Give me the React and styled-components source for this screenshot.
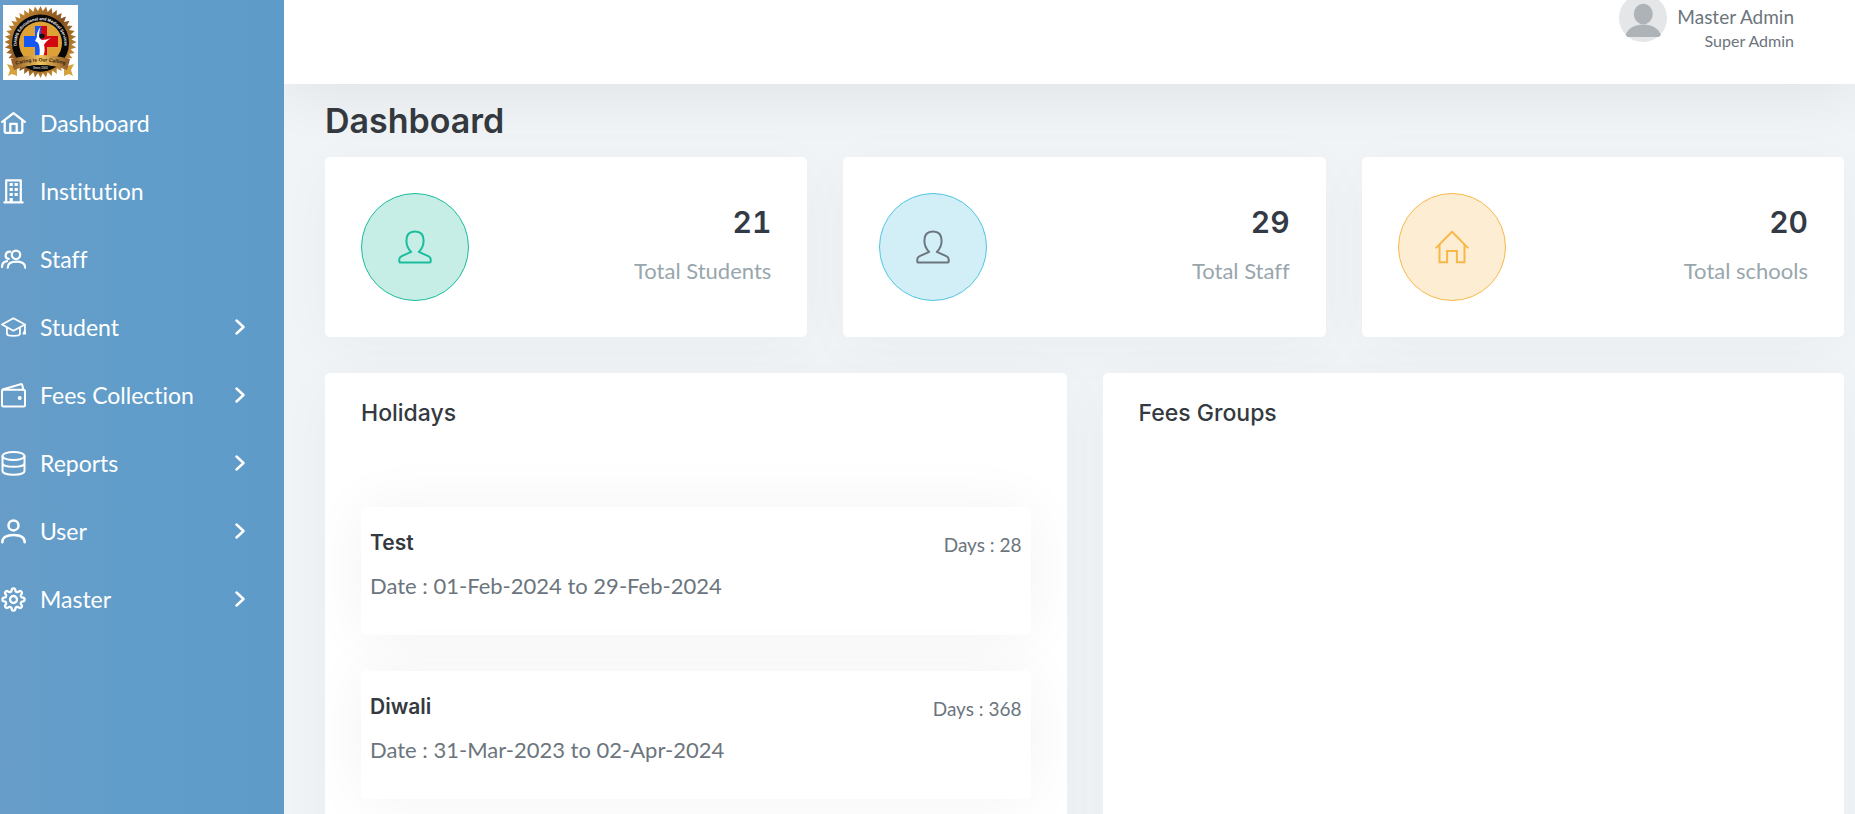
import React from 'react';
import styled, { createGlobalStyle } from 'styled-components';

const headingFont = 'Inter, "Liberation Sans", sans-serif';
const bodyFont = 'Lato, "Liberation Sans", sans-serif';

const GlobalStyle = createGlobalStyle`
  *, *::before, *::after { box-sizing: border-box; }
  body {
    margin: 0;
    background: #f0f4f7;
    color: #6c757d;
    font-family: ${bodyFont};
    font-variant-ligatures: none;
  }
  h1, h2, h3, p, ul { margin: 0; padding: 0; }
  ul { list-style: none; }
`;

const Shell = styled.div`
  display: grid;
  grid-template-columns: 284px minmax(0, 1fr);
  height: 100vh;
  overflow: hidden;
`;

const Sidebar = styled.aside`
  background: linear-gradient(90deg, #679dc8 0%, #619dca 45%, #5f9bc9 100%);
  z-index: 2;
`;

const Brand = styled.a`
  display: block;
  height: 89px;
  padding: 5px 3px;
`;

const navItem = `
  display: flex;
  align-items: center;
  gap: 14px;
  width: 100%;
  height: 68px;
  padding: 0 39px 0 1px;
  border: 0;
  background: none;
  color: #fff;
  font-family: ${bodyFont};
  font-size: 23px;
  font-variant-ligatures: none;
  line-height: 32px;
  text-align: left;
  text-decoration: none;
  cursor: pointer;
`;
const NavLink = styled.a`${navItem}`;
const NavButton = styled.button`${navItem}`;
const NavLabel = styled.span`flex: 1;`;

const LineIcon = styled.svg`
  flex: none;
  fill: none;
  stroke: currentColor;
  stroke-width: ${(p) => p.$weight || 2};
  stroke-linecap: round;
  stroke-linejoin: round;
`;

const Page = styled.div`
  display: flex;
  flex-direction: column;
  min-width: 0;
  height: 100vh;
`;

const Header = styled.header`
  display: flex;
  flex: none;
  justify-content: flex-end;
  align-items: flex-start;
  height: 84px;
  padding-right: 61px;
  background: #fff;
  box-shadow: 0 10px 60px rgba(0, 0, 0, 0.07);
  z-index: 1;
`;

const Profile = styled.a`
  display: flex;
  gap: 10px;
  color: #6c757d;
  text-decoration: none;
`;
const Avatar = styled.svg`
  margin-top: -6px;
`;
const ProfileText = styled.span`
  display: flex;
  flex-direction: column;
  padding-top: 5px;
  text-align: right;
  line-height: 24px;
`;
const ProfileName = styled.span`font-size: 19px;`;
const ProfileRole = styled.span`font-size: 16px;`;

const Main = styled.main`
  flex: 1;
  min-height: 0;
  padding: 16px 11px 36px 41px;
  overflow-y: auto;
  scrollbar-width: none;
`;

const Title = styled.h1`
  margin-bottom: 15px;
  color: #343a40;
  font: 600 34px/42px ${headingFont};
`;

const Grid = styled.div`
  display: grid;
  grid-template-columns: repeat(${(p) => p.$columns}, minmax(0, 1fr));
  gap: 36px;
  margin-bottom: 36px;
`;

const Card = styled.section`
  padding: 36px;
  border-radius: 5px;
  background: #fff;
  box-shadow: 0 10px 60px rgba(0, 0, 0, 0.03);
`;

const StatCard = styled(Card)`
  display: flex;
  justify-content: space-between;
  align-items: center;
`;

const Badge = styled.span`
  display: grid;
  place-items: center;
  width: 108px;
  height: 108px;
  border: 1px solid ${(p) => p.$line};
  border-radius: 50%;
  background: ${(p) => p.$fill};
  color: ${(p) => p.$ink};
`;

const StatText = styled.div`text-align: right;`;
const StatValue = styled.p`
  margin-bottom: 14px;
  color: #323a46;
  font: 600 30px/34px ${headingFont};
  font-variant-numeric: tabular-nums;
`;
const StatLabel = styled.p`
  color: #98a6ad;
  font-size: 22px;
  line-height: 36px;
`;

const Panel = styled(Card)`
  min-height: 540px;
  padding-top: 24px;
`;
const PanelTitle = styled.h2`
  margin-bottom: 78px;
  color: #343a40;
  font: 500 23px/32px ${headingFont};
`;

const HolidayList = styled.ul`
  display: grid;
  gap: 36px;
`;
const Holiday = styled.li`
  height: 128px;
  padding: 20px 9px;
  border-radius: 5px;
  background: #fff;
  box-shadow: 0 0 60px rgba(0, 0, 0, 0.05);
`;
const HolidayTop = styled.div`
  display: flex;
  justify-content: space-between;
  align-items: flex-end;
  height: 32px;
  margin-bottom: 10px;
`;
const HolidayName = styled.h3`
  color: #343a40;
  font: 600 21px/32px ${headingFont};
`;
const HolidayDays = styled.span`
  font-size: 19px;
  line-height: 28px;
`;
const HolidayDate = styled.p`
  font-size: 22px;
  line-height: 34px;
`;

const gearPath = (() => {
  const points = [];
  for (let i = 0; i < 160; i += 1) {
    const angle = (i / 160) * Math.PI * 2;
    const radius = 9.6 + 1.5 * Math.tanh(2 * Math.cos(8 * angle));
    points.push(`${(12.5 + radius * Math.sin(angle)).toFixed(2)} ${(12.5 - radius * Math.cos(angle)).toFixed(2)}`);
  }
  return `M${points.join('L')}Z`;
})();

const icons = {
  home: (
    <>
      <path d="M1.2 10.8 12.5 2.2l11.3 8.6" />
      <path d="M3.7 9.5v11.3a1 1 0 0 0 1 1h15.6a1 1 0 0 0 1-1V9.5" />
      <path d="M9.3 21.5v-8.7h6.4v8.7" />
    </>
  ),
  building: (
    <>
      <path d="M5.2 23V1.3h14.6V23M3.4 23.4h18.2" />
      <path d="M10.2 4v3M15.2 4v3M10.2 9v3M15.2 9v3M10.2 14v3M15.2 14v3M10.2 19v4" strokeWidth="3.2" strokeLinecap="butt" />
    </>
  ),
  staff: (
    <>
      <circle cx="15" cy="7.8" r="4.2" />
      <path d="M6.7 20.7c0-4 3.2-6 8.6-6s8.9 2 8.9 6M9.3 4.7C3.7 4.5 3.2 11.2 7.7 11.9M1 20c0-3.5 1.8-5.3 5-5.9" />
    </>
  ),
  student: (
    <>
      <path d="M12.4 3.2 24 9.5 12.4 15.8 1 9.5Z" />
      <path d="M5.9 12.7v6.5c1 2.3 12 2.3 13 0v-6.5M23.9 9.8V16M23.7 16l-1.2 2.6h2.2Z" />
    </>
  ),
  wallet: (
    <>
      <rect x="1" y="6.8" width="23" height="16.7" rx="1.5" />
      <path d="M1.6 6.5 19.6 1.2c1-.3 1.5.2 1.7 1l1 4.3" />
      <circle cx="18.7" cy="15" r="1" />
    </>
  ),
  reports: (
    <>
      <ellipse cx="12.5" cy="5" rx="11" ry="4" />
      <path d="M1.5 5v15c0 5 22 5 22 0V5M1.5 12.3c0 4.7 22 4.7 22 0" />
    </>
  ),
  user: (
    <>
      <circle cx="12.5" cy="6.4" r="5" />
      <path d="M1.3 23.2c0-4.7 4.2-7.3 11.2-7.3s11.2 2.6 11.2 7.3" />
    </>
  ),
  master: (
    <>
      <path d={gearPath} />
      <circle cx="12.5" cy="12.5" r="3.5" />
    </>
  ),
  person: (
    <path d="M13.2 21.9C10 19 8.4 15.5 8.4 10.500 8.400 4.500 11.500 1.400 17 1.400s8.600 3.100 8.600 9.100c0 5-1.600 8.500-4.800 11.400l9.500 4.200c1.900.9 2.400 1.600 2.400 3.200v2.200c0 .6-.4 1-1 1H2.300c-.6 0-1-.4-1-1v-2.200c0-1.600.5-2.300 2.400-3.200Z" />
  ),
  house: (
    <>
      <path d="M1.3 17.6 17 1.7l15.7 15.9" />
      <path d="M4.5 15v17.3h7.6V20.9h9.8v11.4h7.6V15" strokeLinejoin="miter" />
    </>
  ),
};

const navigation = [
  { label: 'Dashboard', icon: 'home', weight: 2.3 },
  { label: 'Institution', icon: 'building', weight: 2.2 },
  { label: 'Staff', icon: 'staff', weight: 2.2 },
  { label: 'Student', icon: 'student', weight: 1.8, menu: true },
  { label: 'Fees Collection', icon: 'wallet', weight: 2, menu: true },
  { label: 'Reports', icon: 'reports', weight: 2, menu: true },
  { label: 'User', icon: 'user', weight: 2.5, menu: true },
  { label: 'Master', icon: 'master', weight: 2.3, menu: true },
];

const stats = [
  { value: 21, label: 'Total Students', icon: 'person', line: '#1abc9c', fill: '#c6eee6', ink: '#1abc9c' },
  { value: 29, label: 'Total Staff', icon: 'person', line: '#4fc6e1', fill: '#d2eff8', ink: '#6c757d' },
  { value: 20, label: 'Total schools', icon: 'house', line: '#f7b84b', fill: '#fdedd2', ink: '#f7b84b' },
];

const holidays = [
  { name: 'Test', days: 28, from: '01-Feb-2024', to: '29-Feb-2024' },
  { name: 'Diwali', days: 368, from: '31-Mar-2023', to: '02-Apr-2024' },
];

const sealTeeth = Array.from({ length: 80 }, (_, i) => {
  const radius = i % 2 ? 31 : 36;
  const angle = (i / 80) * Math.PI * 2;
  return `${(37.5 + radius * Math.sin(angle)).toFixed(1)},${(37 - radius * Math.cos(angle)).toFixed(1)}`;
}).join(' ');

function Logo() {
  return (
    <svg width="75" height="75" viewBox="0 0 75 75" role="img" aria-label="Educational and Medical Services">
      <defs>
        <linearGradient id="seal" x1="0" x2="1" y1="0" y2="1">
          <stop offset="0" stopColor="#dc9c35" />
          <stop offset=".5" stopColor="#84501f" />
          <stop offset="1" stopColor="#e5a93c" />
        </linearGradient>
        <linearGradient id="ribbon">
          <stop offset="0" stopColor="#8c5524" />
          <stop offset=".5" stopColor="#f0c35c" />
          <stop offset="1" stopColor="#8c5524" />
        </linearGradient>
        <path id="sealArc" d="M14 44a24 24 0 1 1 47 0" />
        <path id="ribbonArc" d="M12 60q25.5-7 51 0" />
      </defs>
      <rect width="75" height="75" fill="#fff" />
      <polygon points={sealTeeth} fill="url(#seal)" />
      <circle cx="37.5" cy="38" r="28.5" fill="#080808" />
      <circle cx="37.5" cy="38" r="21.5" fill="#dfa236" />
      <text fill="#fff" fontFamily="Liberation Sans, sans-serif" fontSize="4" fontWeight="700">
        <textPath href="#sealArc" startOffset="50%" textAnchor="middle">DAIMS Educational and Medical Services</textPath>
      </text>
      <path d="M32 21h6v31h-6V42H21V31h11Z" fill="#1457f5" />
      <path d="M38 21h6v10h11v11H44v10h-6Z" fill="#d10812" />
      <path d="M37.5 22c-3 4-4 7-3.500 10l-2 4c2 1 3 1 4 4 1 4 1 8 0 12h4c2-5 2-8 1-12 1-3 4-5 7-7-3 1-6 2-9 2-3-1-4-5-1.500-13Z" fill="#fff" />
      <ellipse cx="39" cy="31" rx="2.8" ry="2.3" fill="#18120f" />
      <path d="m4 59 10 3v9l-5-2-4 2 2-6ZM71 59l-10 3v9l5-2 4 2-2-6Z" fill="#d5a23d" />
      <path d="M8 54q29-8 59 0l-3 11q-26-10-53 0Z" fill="url(#ribbon)" />
      <text fill="#302010" fontFamily="Liberation Sans, sans-serif" fontSize="5" fontWeight="700">
        <textPath href="#ribbonArc" startOffset="50%" textAnchor="middle">Caring is Our Calling</textPath>
      </text>
      <path d="M23 62q14-4 29 0-14 9-29 0Z" fill="#080808" />
      <text x="37.5" y="64" textAnchor="middle" fill="#fff" fontFamily="Liberation Sans, sans-serif" fontSize="3">Since 2001</text>
    </svg>
  );
}

function NavEntry({ label, icon, weight, menu }) {
  const Item = menu ? NavButton : NavLink;
  const attributes = menu ? { type: 'button', 'aria-expanded': false } : { href: '#' };
  return (
    <li>
      <Item {...attributes}>
        <LineIcon width="25" height="25" viewBox="0 0 25 25" $weight={weight} aria-hidden="true">{icons[icon]}</LineIcon>
        <NavLabel>{label}</NavLabel>
        {menu && (
          <LineIcon width="10" height="16" viewBox="0 0 10 16" $weight={2.4} aria-hidden="true">
            <path d="m1.5 1.5 7 6.5-7 6.5" />
          </LineIcon>
        )}
      </Item>
    </li>
  );
}

export default function App() {
  return (
    <>
      <GlobalStyle />
      <Shell>
        <Sidebar>
          <Brand href="#" aria-label="Home"><Logo /></Brand>
          <nav aria-label="Main">
            <ul>{navigation.map((item) => <NavEntry key={item.label} {...item} />)}</ul>
          </nav>
        </Sidebar>
        <Page>
          <Header>
            <Profile href="#">
              <Avatar width="48" height="48" viewBox="0 0 48 48" aria-hidden="true">
                <circle cx="24" cy="24" r="24" fill="#e4e6e8" />
                <ellipse cx="24.3" cy="20" rx="9.5" ry="10.3" fill="#adb3b7" />
                <path d="M6.5 41C9 34.5 16 30.5 24.3 30.5S39.500 34.500 42 41l-2 2H8.500Z" fill="#adb3b7" />
              </Avatar>
              <ProfileText>
                <ProfileName>Master Admin</ProfileName>
                <ProfileRole>Super Admin</ProfileRole>
              </ProfileText>
            </Profile>
          </Header>
          <Main>
            <Title>Dashboard</Title>
            <Grid $columns={3}>
              {stats.map(({ value, label, icon, line, fill, ink }) => (
                <StatCard key={label}>
                  <Badge $line={line} $fill={fill} $ink={ink}>
                    <LineIcon width="34" height="34" viewBox="0 0 34 34" $weight={2} aria-hidden="true">{icons[icon]}</LineIcon>
                  </Badge>
                  <StatText>
                    <StatValue>{value}</StatValue>
                    <StatLabel>{label}</StatLabel>
                  </StatText>
                </StatCard>
              ))}
            </Grid>
            <Grid $columns={2}>
              <Panel>
                <PanelTitle>Holidays</PanelTitle>
                <HolidayList>
                  {holidays.map((holiday) => (
                    <Holiday key={holiday.name}>
                      <HolidayTop>
                        <HolidayName>{holiday.name}</HolidayName>
                        <HolidayDays>Days : {holiday.days}</HolidayDays>
                      </HolidayTop>
                      <HolidayDate>Date : {holiday.from} to {holiday.to}</HolidayDate>
                    </Holiday>
                  ))}
                </HolidayList>
              </Panel>
              <Panel>
                <PanelTitle>Fees Groups</PanelTitle>
              </Panel>
            </Grid>
          </Main>
        </Page>
      </Shell>
    </>
  );
}
